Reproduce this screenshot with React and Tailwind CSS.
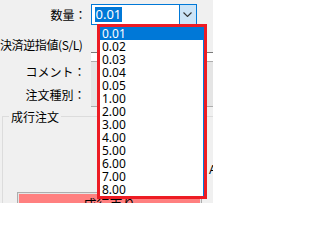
import React from "react";

const items = ["0.01","0.02","0.03","0.04","0.05","1.00","2.00","3.00","4.00","5.00","6.00","7.00","8.00"];

export default function App() {
  return (
    <div className="relative w-[213px] h-[203px] overflow-hidden bg-[#f0f0f0] text-black" style={{ fontFamily: '"Noto Sans CJK JP", sans-serif' }}>
      <div className="flex pt-[4px]">
        <div className="w-[99px] flex flex-col text-[12px] leading-[21px]">
          <div className="h-[21px] pr-[4px] text-right">数量：</div>
          <div className="h-[21px] mt-[9px] pr-[8px] text-right whitespace-nowrap tracking-[-0.4px]">決済逆指値(S/L)</div>
          <div className="h-[21px] mt-[6px] pr-[5px] text-right">コメント：</div>
          <div className="h-[21px] mt-[2px] pr-[5px] text-right">注文種別：</div>
        </div>
        <div className="flex flex-col">
          <div className="flex w-[106px] h-[21px] border border-[#0078d7] bg-white">
            <div className="flex-1 flex items-center pl-[3px]">
              <span className="bg-[#0078d7] text-white text-[13px] leading-[15px] px-[1px]" style={{ fontFamily: '"Noto Sans", sans-serif' }}>0.01</span>
            </div>
            <div className="w-[17px] h-full bg-[#cce4f7] border-l border-[#0078d7] flex items-center justify-center">
              <svg width="9" height="5" viewBox="0 0 9 5"><path d="M0.5 0.5 L4.5 4.5 L8.5 0.5" fill="none" stroke="#333" strokeWidth="1.1" /></svg>
            </div>
          </div>
          <div className="mt-[6px] w-[107px] h-[21px]"></div>
          <div className="w-[130px] h-[9px] bg-white border-t border-[#7a7a7a]"></div>
          <div className="w-[130px] h-[46px] bg-[#e5e5e5] border-t border-b border-[#adadad]"></div>
        </div>
      </div>

      <fieldset className="ml-[2px] mt-[1px] w-[240px] h-[130px] border border-[#dcdcdc] px-0">
        <legend className="ml-[6px] px-[2px] text-[12px] leading-[17px]">成行注文</legend>
        <div className="h-[67px] pl-[205px] text-[12px] leading-[14px] pt-[37px]">
          <span className="pl-[1px]" style={{ fontFamily: '"Noto Sans", sans-serif' }}>A</span>
        </div>
        <div className="ml-[14px] w-[185px] h-[30px] border border-[#adadad] bg-[#e5e5e5] p-[1px]">
          <div className="w-full h-full bg-[#ff8080] text-center text-[13px] leading-[18px] pt-[1px]">成行売り</div>
        </div>
      </fieldset>

      <div className="absolute left-[97px] top-[24px] w-[110px] h-[175px] border-[3px] border-[#ed1c24] bg-white">
        <div className="h-full border-r border-[#0078d7] flex flex-col" style={{ fontFamily: '"Noto Sans", sans-serif' }}>
          {items.map((v, i) => (
            <div key={v} className={i === 0 ? "h-[13px] pl-[2px] text-[12px] leading-[13px] bg-[#0078d7] text-white" : "h-[13px] pl-[2px] text-[12px] leading-[13px] text-black"}>{v}</div>
          ))}
        </div>
      </div>
    </div>
  );
}
